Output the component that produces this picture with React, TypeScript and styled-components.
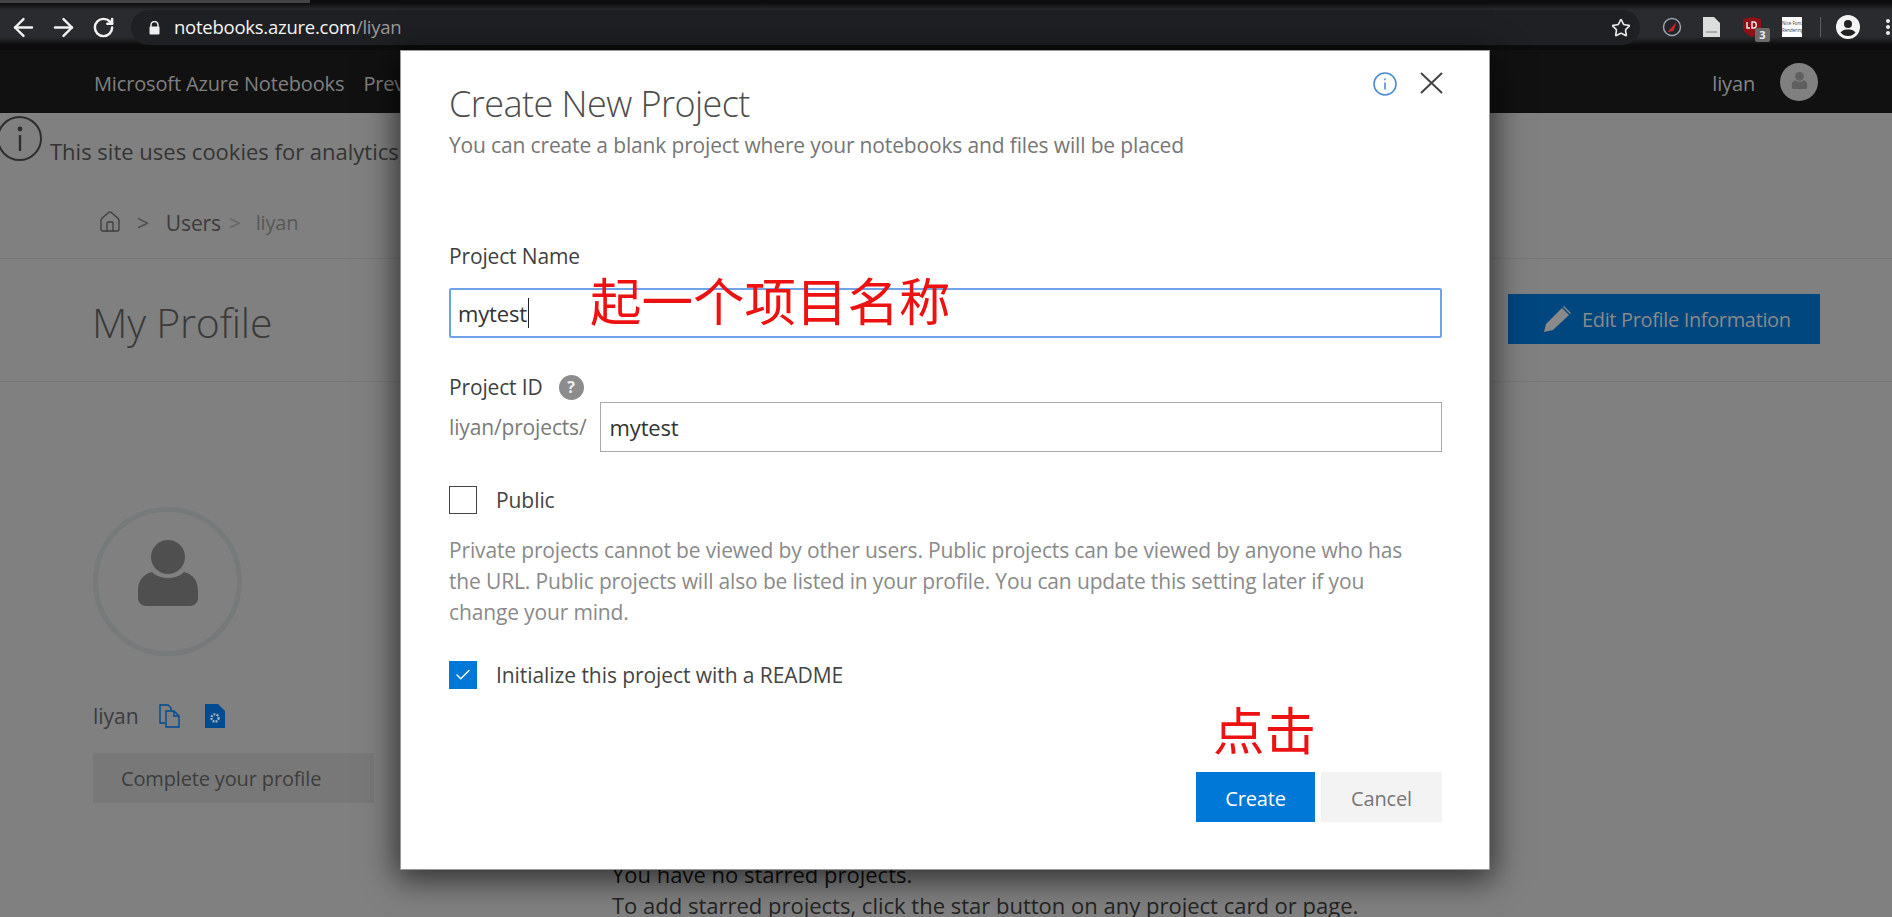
import styled, { createGlobalStyle } from "styled-components";
import { ArrowLeft, ArrowRight, RotateCw, Star, Home, Check } from "lucide-react";

const GlobalStyle = createGlobalStyle`
  html, body {
    margin: 0;
    padding: 0;
    height: 917px;
    overflow: hidden;
    background: #808080;
  }
  * { box-sizing: border-box; }
  body, button, input {
    font-family: "Open Sans", "Noto Sans", "Liberation Sans", sans-serif;
    letter-spacing: -0.15px;
  }
`;

const Page = styled.div`
  position: relative;
  width: 1892px;
  height: 917px;
  overflow: hidden;
  background: #808080;
`;

/* browser chrome */
const BrowserBar = styled.div`
  height: 50px;
  display: flex;
  align-items: flex-start;
  padding: 10px 0 0 9px;
  background: linear-gradient(#0d0d0d 0, #0d0d0d 3px, #2a2b2e 10px, #2a2b2e 37px, #0c0c0c 45px);
  color: #f2f2f2;
  position: relative;
`;

const TabEdge = styled.div`
  position: absolute;
  top: 0;
  left: 0;
  width: 310px;
  height: 3px;
  background: #444;
`;

const NavIcons = styled.div`
  display: flex;
  align-items: center;
  gap: 11px;
  height: 34px;
  width: 122px;
  flex: none;
`;

const ReloadSlot = styled.span`
  display: flex;
  margin-left: 3px;
`;

const AddressPill = styled.div`
  flex: none;
  width: 1509px;
  height: 35px;
  border-radius: 18px;
  background: #1f2023;
  display: flex;
  align-items: center;
  padding: 0 9px 0 18px;
`;

const LockIcon = styled.span`
  width: 11px;
  height: 14px;
  margin-right: 14px;
  display: flex;
`;

const Url = styled.span`
  font-size: 18.5px;
  color: #f4f4f4;
  letter-spacing: -0.25px;
  flex: 1;
  margin-top: -2px;
`;

const UrlPath = styled.span`
  color: #9a9a9a;
`;

const Extensions = styled.div`
  display: flex;
  align-items: center;
  height: 34px;
  padding-left: 22px;
  position: relative;
`;

const ExtSlot = styled.div<{ $w: number }>`
  width: ${(p) => p.$w}px;
  flex: none;
  display: flex;
  align-items: center;
  position: relative;
`;

const UdBadge = styled.span`
  position: absolute;
  left: 12px;
  top: 11px;
  width: 15px;
  height: 14px;
  border-radius: 2px;
  background: #6a6a6a;
  color: #eee;
  font-size: 11px;
  font-weight: 700;
  letter-spacing: 0;
  text-align: center;
  line-height: 14px;
`;

const FontExt = styled.div`
  width: 20px;
  height: 20px;
  background: #fdfdfd;
  color: #333;
  font-size: 4.5px;
  line-height: 7px;
  letter-spacing: 0;
  text-align: center;
  padding-top: 3px;
`;

const Divider = styled.div`
  width: 1px;
  height: 20px;
  background: #5e5e5e;
  margin-right: 15px;
  flex: none;
`;

const KebabDots = styled.span`
  width: 4px;
  height: 4px;
  margin-left: 26px;
  border-radius: 50%;
  background: #eee;
  box-shadow: 0 -6px 0 #eee, 0 6px 0 #eee;
  flex: none;
`;

/* app header */
const AppNav = styled.header`
  height: 63px;
  background: #111;
  display: flex;
  align-items: center;
  padding: 4px 74px 0 94px;
  color: #808080;
  font-size: 20px;
`;

const NavBrand = styled.span`
  margin-right: 19px;
`;

const NavSpacer = styled.span`
  flex: 1;
`;

const UserName = styled.span`
  margin-right: 25px;
  color: #858585;
`;

const UserAvatar = styled.div`
  width: 38px;
  height: 38px;
  margin-top: -4px;
  padding-bottom: 3px;
  border-radius: 50%;
  background: #808080;
  display: flex;
  align-items: center;
  justify-content: center;
`;

/* page under the dialog */
const CookieRow = styled.div`
  height: 56px;
  display: flex;
  align-items: flex-start;
  margin-left: -3px;
  padding-top: 3px;
  color: #343434;
  font-size: 22px;
  letter-spacing: 0;
`;

const CookieIcon = styled.div`
  width: 45px;
  height: 45px;
  flex: none;
  margin-right: 8px;
  border: 2px solid #2e2e2e;
  border-radius: 50%;
  display: flex;
  align-items: center;
  justify-content: center;
`;

const CookieText = styled.span`
  margin-top: 20px;
  white-space: nowrap;
`;

const Breadcrumbs = styled.nav`
  height: 89px;
  display: flex;
  align-items: flex-start;
  padding: 39px 0 0 98px;
  font-size: 21px;
  color: #3c3c3c;
`;

const Crumb = styled.span<{ $dim?: boolean }>`
  color: ${(p) => (p.$dim ? "#585858" : "#3c3c3c")};
  font-size: ${(p) => (p.$dim ? 20 : 21)}px;
  line-height: 30px;
`;

const CrumbSep = styled.span<{ $dim?: boolean }>`
  color: ${(p) => (p.$dim ? "#666" : "#4c4c4c")};
  margin: ${(p) => (p.$dim ? "0 15px 0 8px" : "0 17px 0 15px")};
  line-height: 30px;
`;

const CrumbHome = styled.span`
  height: 24px;
  display: flex;
  color: #3c3c3c;
  margin-top: 2px;
`;

const ProfileHeader = styled.section`
  height: 124px;
  border-top: 1px solid #777;
  border-bottom: 1px solid #777;
  display: flex;
  align-items: center;
  justify-content: space-between;
  padding: 0 72px 0 92px;
`;

const ProfileTitle = styled.h1`
  margin: 3px 0 0;
  font-size: 41px;
  font-weight: 300;
  letter-spacing: -0.2px;
  color: #3a3a3a;
`;

const EditButton = styled.div`
  width: 312px;
  height: 50px;
  margin-top: -2px;
  background: #00467f;
  color: #8a8a8a;
  font-size: 20px;
  letter-spacing: -0.35px;
  display: flex;
  align-items: center;
  padding-left: 36px;
  gap: 11px;
`;

const Content = styled.div`
  display: grid;
  grid-template-columns: 517px 1fr;
  padding-left: 93px;
`;

const SideColumn = styled.aside`
  padding-top: 125px;
`;

const BigAvatar = styled.div`
  width: 149px;
  height: 149px;
  padding-bottom: 18px;
  border-radius: 50%;
  border: 5px solid #767a7a;
  display: flex;
  align-items: center;
  justify-content: center;
  margin-bottom: 42px;
`;

const NameRow = styled.div`
  display: flex;
  align-items: center;
  height: 36px;
  font-size: 21px;
  letter-spacing: 0;
  color: #3c3c3c;
  margin-bottom: 19px;
`;

const NameText = styled.span`
  margin-right: 20px;
`;

const NameIcon = styled.span`
  display: flex;
  margin-right: 25px;
`;

const CompleteButton = styled.div`
  width: 281px;
  height: 50px;
  background: #787878;
  color: #3d3d3d;
  font-size: 20px;
  display: flex;
  align-items: center;
  padding-left: 28px;
`;

const StarredColumn = styled.div`
  padding-top: 477px;
  padding-left: 2px;
  color: #242424;
  font-size: 22px;
  letter-spacing: 0;
  line-height: 30px;
  white-space: nowrap;
`;

const StarredTitle = styled.div`
  margin-bottom: 1px;
  color: #0e0e0e;
`;

/* dialog */
const Modal = styled.div`
  position: absolute;
  left: 400px;
  top: 50px;
  width: 1090px;
  height: 820px;
  background: #fff;
  border: 1px solid #9a9a9a;
  box-shadow: 0 6px 30px 4px rgba(0, 0, 0, 0.62);
  padding: 0 47px 0 48px;
  display: flex;
  flex-direction: column;
`;

const ModalActions = styled.div`
  position: absolute;
  top: 21px;
  right: 46px;
  display: flex;
  align-items: flex-start;
  gap: 23px;
`;

const ModalTitle = styled.h2`
  margin: 30px 0 0;
  font-size: 36px;
  line-height: 46px;
  font-weight: 300;
  letter-spacing: -0.55px;
  color: #4c4c4c;
`;

const ModalSubtitle = styled.p`
  margin: 3px 0 0;
  font-size: 21px;
  line-height: 30px;
  color: #767676;
`;

const FieldLabel = styled.label`
  display: flex;
  align-items: center;
  gap: 16px;
  font-size: 21px;
  line-height: 30px;
  color: #3f3f3f;
`;

const NameField = styled.div`
  margin-top: 81px;
  position: relative;
`;

const NameInput = styled.div`
  margin-top: 17px;
  height: 50px;
  border: 2px solid #6ea3e8;
  border-radius: 2px;
  padding-left: 7px;
  display: flex;
  align-items: center;
  font-size: 22px;
  color: #333;
`;

const Caret = styled.span`
  width: 1px;
  height: 30px;
  background: #222;
  margin-left: 1px;
`;

const Annotation = styled.span<{ $left: number; $top: number }>`
  position: absolute;
  left: ${(p) => p.$left}px;
  top: ${(p) => p.$top}px;
  color: #ee1111;
  font-family: "Noto Sans CJK SC", sans-serif;
  font-size: 51.5px;
  line-height: 60px;
  letter-spacing: 0;
  white-space: nowrap;
`;

const IdField = styled.div`
  margin-top: 34px;
`;

const HelpDot = styled.span`
  width: 25px;
  height: 25px;
  border-radius: 50%;
  background: #8c8c8c;
  color: #eee;
  font-size: 16px;
  font-weight: 700;
  display: flex;
  align-items: center;
  justify-content: center;
`;

const IdRow = styled.div`
  display: flex;
  align-items: center;
  gap: 13px;
  font-size: 21px;
  color: #7a7a7a;
`;

const IdInput = styled.div`
  flex: 1;
  height: 50px;
  border: 1px solid #aaa;
  padding-left: 9px;
  display: flex;
  align-items: center;
  font-size: 22px;
  color: #333;
`;

const CheckRow = styled.div<{ $top: number }>`
  display: flex;
  align-items: center;
  gap: 19px;
  margin-top: ${(p) => p.$top}px;
  font-size: 21px;
  letter-spacing: -0.07px;
  color: #444;
`;

const CheckBox = styled.span<{ $on?: boolean }>`
  width: 28px;
  height: 28px;
  flex: none;
  border: ${(p) => (p.$on ? "none" : "1.5px solid #444")};
  background: ${(p) => (p.$on ? "#0078d7" : "#fff")};
  display: flex;
  align-items: center;
  justify-content: center;
`;

const HelpText = styled.p`
  margin: 21px 0 0;
  max-width: 975px;
  font-size: 21px;
  line-height: 31px;
  color: #8a8a8a;
`;

const Footer = styled.div`
  margin-top: auto;
  margin-bottom: 47px;
  display: flex;
  justify-content: flex-end;
  gap: 6px;
  position: relative;
`;

const Button = styled.div<{ $primary?: boolean }>`
  width: ${(p) => (p.$primary ? 119 : 121)}px;
  height: 50px;
  padding-top: 2px;
  font-size: 20px;
  background: ${(p) => (p.$primary ? "#0078d7" : "#f3f3f3")};
  color: ${(p) => (p.$primary ? "#fff" : "#777")};
  display: flex;
  align-items: center;
  justify-content: center;
`;

const PersonIcon = ({ size, color }: { size: number; color: string }) => (
  <svg width={size} height={size} viewBox="0 0 60 66" fill={color}>
    <circle cx="30" cy="17" r="17" />
    <path d="M14 32c4 4 10 6 16 6s12-2 16-6c9 2 14 9 14 19v7c0 4-3 8-8 8H8c-5 0-8-4-8-8v-7c0-10 5-17 14-19z" />
  </svg>
);

export default function App() {
  return (
    <Page>
      <GlobalStyle />
      <BrowserBar>
        <TabEdge />
        <NavIcons>
          <ArrowLeft size={29} strokeWidth={2} />
          <ArrowRight size={29} strokeWidth={2} />
          <ReloadSlot>
            <RotateCw size={23} strokeWidth={2.6} />
          </ReloadSlot>
        </NavIcons>
        <AddressPill>
          <LockIcon>
            <svg width="11" height="14" viewBox="0 0 11 14">
              <path d="M2 6V4a3.5 3.5 0 0 1 7 0v2" fill="none" stroke="#eee" strokeWidth="1.5" />
              <rect x="0.5" y="5.5" width="10" height="8" rx="1" fill="#eee" />
            </svg>
          </LockIcon>
          <Url>
            notebooks.azure.com<UrlPath>/liyan</UrlPath>
          </Url>
          <Star size={20} color="#e6e6e6" strokeWidth={2} />
        </AddressPill>
        <Extensions>
          <ExtSlot $w={41}>
            <svg width="20" height="20" viewBox="0 0 20 20">
              <circle cx="10" cy="10" r="8.5" fill="#22242a" stroke="#9aa4b0" strokeWidth="1.5" />
              <path d="M5.5 15L14.5 5l-3 9z" fill="#c9262c" />
            </svg>
          </ExtSlot>
          <ExtSlot $w={40}>
            <svg width="17" height="20" viewBox="0 0 17 20">
              <path d="M0 0h11l6 6v14H0z" fill="#dcdcdc" />
              <path d="M3 14h11v2H3z" fill="#aaa" />
            </svg>
          </ExtSlot>
          <ExtSlot $w={39}>
            <svg width="18" height="20" viewBox="0 0 18 20">
              <path d="M0 2l9-2 9 2v9c0 4-5 7-9 9-4-2-9-5-9-9z" fill="#8f1118" />
              <path d="M4 5v6h3M9 5v6h2c3 0 3-6 0-6z" fill="none" stroke="#eee" strokeWidth="1.4" />
            </svg>
            <UdBadge>3</UdBadge>
          </ExtSlot>
          <ExtSlot $w={38}>
            <FontExt>Nice Font Rendering</FontExt>
          </ExtSlot>
          <Divider />
          <svg width="24" height="24" viewBox="0 0 24 24">
            <circle cx="12" cy="12" r="12" fill="#f4f4f4" />
            <circle cx="12" cy="9" r="4" fill="#222" />
            <path d="M4.5 17.5C6.5 15 9 14.5 12 14.5s5.500.5 7.500 3C17.500 20 15 21 12 21s-5.500-1-7.500-3.500z" fill="#222" />
          </svg>
          <KebabDots />
        </Extensions>
      </BrowserBar>

      <AppNav>
        <NavBrand>Microsoft Azure Notebooks</NavBrand>
        <span>Preview</span>
        <NavSpacer />
        <UserName>liyan</UserName>
        <UserAvatar>
          <PersonIcon size={17} color="#5f5f5f" />
        </UserAvatar>
      </AppNav>

      <CookieRow>
        <CookieIcon>
          <svg width="8" height="26" viewBox="0 0 8 26" fill="#2e2e2e">
            <circle cx="4" cy="3" r="2.4" />
            <rect x="2.800" y="9" width="2.4" height="16" />
          </svg>
        </CookieIcon>
        <CookieText>This site uses cookies for analytics, personalized content and ads.</CookieText>
      </CookieRow>

      <Breadcrumbs>
        <CrumbHome>
          <Home size={24} strokeWidth={1.3} />
        </CrumbHome>
        <CrumbSep>&gt;</CrumbSep>
        <Crumb>Users</Crumb>
        <CrumbSep $dim>&gt;</CrumbSep>
        <Crumb $dim>liyan</Crumb>
      </Breadcrumbs>

      <ProfileHeader>
        <ProfileTitle>My Profile</ProfileTitle>
        <EditButton>
          <svg width="27" height="26" viewBox="0 0 27 26" fill="#8a8a8a">
            <path d="M0 26l2-8L18 2l7 7L9 24z" />
            <path d="M20 0l7 7-1 1-7-7z" />
          </svg>
          Edit Profile Information
        </EditButton>
      </ProfileHeader>

      <Content>
        <SideColumn>
          <BigAvatar>
            <PersonIcon size={66} color="#4f4f4f" />
          </BigAvatar>
          <NameRow>
            <NameText>liyan</NameText>
            <NameIcon>
              <svg width="21" height="24" viewBox="0 0 21 24" fill="none" stroke="#004a8f" strokeWidth="1.4">
                <path d="M6 19H1V1h8l3 3v3" />
                <path d="M7 7h8l5 5v11H7z" />
                <path d="M15 7v5h5" />
              </svg>
            </NameIcon>
            <NameIcon>
              <svg width="20" height="24" viewBox="0 0 20 24">
                <path d="M0 0h13l7 7v17H0z" fill="#004a8f" />
                <circle cx="10" cy="14" r="3.600" fill="none" stroke="#9ab" strokeWidth="2.4" strokeDasharray="2 1" />
              </svg>
            </NameIcon>
          </NameRow>
          <CompleteButton>Complete your profile</CompleteButton>
        </SideColumn>
        <StarredColumn>
          <StarredTitle>You have no starred projects.</StarredTitle>
          <div>To add starred projects, click the star button on any project card or page.</div>
        </StarredColumn>
      </Content>

      <Modal>
        <ModalActions>
          <svg width="24" height="24" viewBox="0 0 24 24" fill="none" stroke="#4a8ad8" strokeWidth="1.600">
            <circle cx="12" cy="12" r="11" />
            <path d="M12 10.500v7M12 6.500v1.800" />
          </svg>
          <svg width="23" height="22" viewBox="0 0 23 22" fill="none" stroke="#444" strokeWidth="2">
            <path d="M1 1l21 20M22 1L1 21" />
          </svg>
        </ModalActions>
        <ModalTitle>Create New Project</ModalTitle>
        <ModalSubtitle>You can create a blank project where your notebooks and files will be placed</ModalSubtitle>

        <NameField>
          <FieldLabel>Project Name</FieldLabel>
          <NameInput>
            mytest
            <Caret />
          </NameInput>
          <Annotation $left={141} $top={28}>起一个项目名称</Annotation>
        </NameField>

        <IdField>
          <FieldLabel>
            Project ID
            <HelpDot>?</HelpDot>
          </FieldLabel>
          <IdRow>
            liyan/projects/
            <IdInput>mytest</IdInput>
          </IdRow>
        </IdField>

        <CheckRow $top={34}>
          <CheckBox />
          Public
        </CheckRow>

        <HelpText>
          Private projects cannot be viewed by other users. Public projects can be viewed by anyone who has
          the URL. Public projects will also be listed in your profile. You can update this setting later if you
          change your mind.
        </HelpText>

        <CheckRow $top={33}>
          <CheckBox $on>
            <Check size={18} color="#fff" strokeWidth={1.800} />
          </CheckBox>
          Initialize this project with a README
        </CheckRow>

        <Footer>
          <Annotation $left={764} $top={-74}>点击</Annotation>
          <Button $primary>Create</Button>
          <Button>Cancel</Button>
        </Footer>
      </Modal>
    </Page>
  );
}
